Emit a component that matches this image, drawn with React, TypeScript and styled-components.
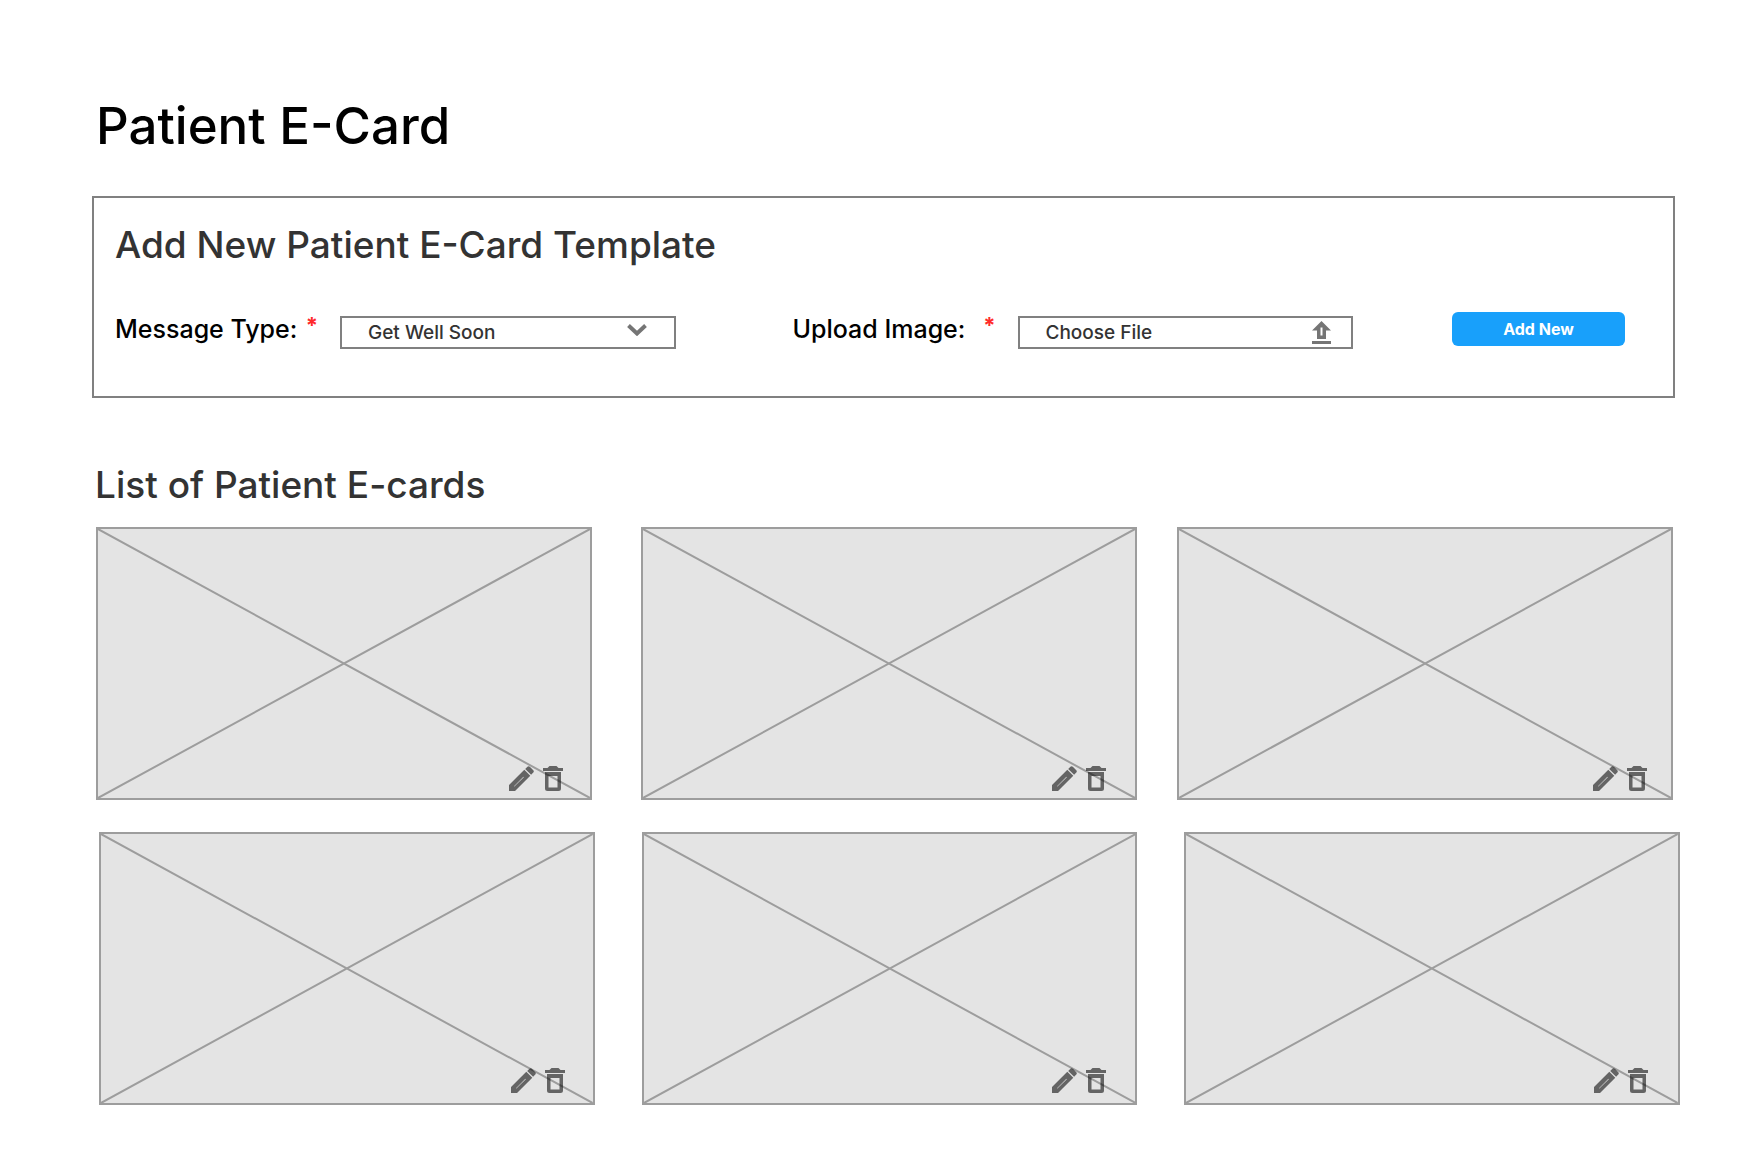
import React, { useState } from "react";
import styled, { createGlobalStyle } from "styled-components";

const GlobalStyle = createGlobalStyle`
  *, *::before, *::after { box-sizing: border-box; }
  body {
    margin: 0;
    background: #ffffff;
    color: #000000;
    font-family: Inter, "Open Sans", "Liberation Sans", sans-serif;
    font-weight: 500;
  }
`;

const Page = styled.main`
  padding: 94px 65px 60px 92px;
`;

const Title = styled.h1`
  margin: 0 0 38px;
  padding-left: 4px;
  font-size: 51px;
  line-height: 64px;
  font-weight: 500;
`;

const Panel = styled.section`
  margin-right: 5px;
  padding: 23px 48px 47px 21px;
  border: 2px solid #808080;
`;

const Heading = styled.h2`
  margin: 0;
  font-size: 37px;
  line-height: 48px;
  font-weight: 500;
  color: #333333;
`;

const Form = styled.form`
  display: flex;
  align-items: flex-start;
  gap: 99px;
  padding-top: 43px;
`;

const Field = styled.div<{ $after?: number }>`
  flex: 1;
  display: flex;
  margin-right: ${(p) => p.$after ?? 0}px;
`;

const Label = styled.label`
  display: flex;
  justify-content: space-between;
  width: 225px;
  padding-right: 22px;
  flex: none;
  font-size: 25px;
  line-height: 34px;
  white-space: nowrap;
`;

const Required = styled.span`
  font-size: 22px;
  line-height: 26px;
  font-weight: 700;
  color: #ff2b2b;
`;

const Control = styled.div`
  flex: 1;
  display: grid;
  align-items: center;
  height: 33px;
  margin-top: 4px;
  border: 2px solid #808080;
  color: #333333;
  font-size: 19px;

  & > * { grid-area: 1 / 1; }
  & > svg { justify-self: end; pointer-events: none; }
  &:focus-within { border-color: #18a0fb; }
`;

const Select = styled.select`
  appearance: none;
  width: 100%;
  height: 29px;
  padding: 0 60px 0 26px;
  border: 0;
  outline: 0;
  background: transparent;
  color: inherit;
  font: inherit;
`;

const FileName = styled.span`
  padding: 0 60px 0 26px;
  overflow: hidden;
  white-space: nowrap;
  text-overflow: ellipsis;
`;

const FileInput = styled.input`
  width: 100%;
  height: 29px;
  margin: 0;
  opacity: 0;
  cursor: pointer;
`;

const Chevron = styled.svg`
  width: 20px;
  height: 12px;
  margin: 0 27px 5px 0;
`;

const UploadIcon = styled.svg`
  width: 19px;
  height: 23px;
  margin-right: 20px;
`;

const AddButton = styled.button`
  width: 173px;
  height: 34px;
  flex: none;
  padding: 0;
  border: 0;
  border-radius: 6px;
  background: #18a0fb;
  color: #ffffff;
  font: 700 16px/34px Inter, "Open Sans", sans-serif;
  cursor: pointer;
`;

const ListSection = styled.section`
  padding: 63px 0 0 3px;
`;

const ListHeading = styled(Heading)`
  margin-bottom: 18px;
`;

const CardRow = styled.div<{ $gaps: [number, number]; $start: number; $end: number }>`
  display: grid;
  grid-template-columns: 1fr ${(p) => p.$gaps[0]}px 1fr ${(p) => p.$gaps[1]}px 1fr;
  padding: 0 ${(p) => p.$end}px 0 ${(p) => p.$start}px;

  & + & { margin-top: 32px; }
  & > :nth-child(2) { grid-column: 3; }
  & > :nth-child(3) { grid-column: 5; }
`;

const Card = styled.article`
  display: grid;
  height: 273px;
  border: 2px solid #9d9d9d;
  background: #e4e4e4;

  & > * { grid-area: 1 / 1; }
`;

const Cross = styled.svg`
  width: 100%;
  height: 269px;
  stroke: #9d9d9d;
  stroke-width: 2;
`;

const Actions = styled.div<{ $right: number; $bottom: number }>`
  place-self: end;
  display: flex;
  gap: 9px;
  padding: 0 ${(p) => p.$right}px ${(p) => p.$bottom}px 0;
`;

const IconButton = styled.button<{ $width: number }>`
  width: ${(p) => p.$width}px;
  height: 25px;
  padding: 0;
  border: 0;
  background: transparent;
  color: rgba(0, 0, 0, 0.56);
  cursor: pointer;

  svg { display: block; width: 100%; height: 100%; fill: currentColor; }
`;

const rows: { gaps: [number, number]; start: number; end: number; bottom: number; insets: number[] }[] = [
  { gaps: [49, 40], start: 1, end: 7, bottom: 7, insets: [27, 29, 24] },
  { gaps: [47, 47], start: 4, end: 0, bottom: 10, insets: [28, 29, 30] },
];

function ECard({ right, bottom, name }: { right: number; bottom: number; name: string }) {
  return (
    <Card aria-label={name}>
      <Cross viewBox="0 0 492 269" preserveAspectRatio="none" aria-hidden="true">
        <path d="M0 0L492 269M492 0L0 269" fill="none" />
      </Cross>
      <Actions $right={right} $bottom={bottom}>
        <IconButton type="button" $width={25} aria-label={`Edit ${name}`}>
          <svg viewBox="0 0 25 25">
            <path
              fillRule="evenodd"
              d="M0 19L15.3 3.7L21.3 9.7L6 25H0ZM5 20.2L5.4 20.6L14.8 11.2L14.4 10.8ZM16.2 2.9L18.4 .7Q19.6-.3 20.8.7L24.3 4.2Q25.3 5.4 24.3 6.6L22.1 8.8Z"
            />
          </svg>
        </IconButton>
        <IconButton type="button" $width={20} aria-label={`Delete ${name}`}>
          <svg viewBox="0 0 20 25">
            <path
              fillRule="evenodd"
              d="M0 2H4.5L6.5 0H13.5L15.5 2H20V5H0ZM2 6H18V22.5Q18 25 15.5 25H4.5Q2 25 2 22.5ZM5.5 10V21.5H14.5V10Z"
            />
          </svg>
        </IconButton>
      </Actions>
    </Card>
  );
}

export default function App() {
  const [fileName, setFileName] = useState("Choose File");
  return (
    <>
      <GlobalStyle />
      <Page>
        <Title>Patient E-Card</Title>
        <Panel>
          <Heading>Add New Patient E-Card Template</Heading>
          <Form onSubmit={(e) => e.preventDefault()}>
            <Field $after={18}>
              <Label htmlFor="message-type">
                Message Type:<Required>*</Required>
              </Label>
              <Control>
                <Select id="message-type" defaultValue="Get Well Soon">
                  <option>Get Well Soon</option>
                </Select>
                <Chevron viewBox="0 0 20 12" aria-hidden="true">
                  <path d="M1.5 1.5L10 9.5L18.5 1.5" fill="none" stroke="#757575" strokeWidth="4" />
                </Chevron>
              </Control>
            </Field>
            <Field>
              <Label htmlFor="card-image">
                Upload Image:<Required>*</Required>
              </Label>
              <Control>
                <FileName>{fileName}</FileName>
                <FileInput
                  id="card-image"
                  type="file"
                  accept="image/*"
                  onChange={(e) => setFileName(e.target.files?.[0]?.name ?? "Choose File")}
                />
                <UploadIcon viewBox="0 0 19 23" aria-hidden="true">
                  <path
                    fill="#757575"
                    fillRule="evenodd"
                    d="M9.5 0L19 9.5H14V18H5V9.5H0ZM8.5 6.5V14.5H10.5V6.5ZM0 20H19V23H0Z"
                  />
                </UploadIcon>
              </Control>
            </Field>
            <AddButton type="submit">Add New</AddButton>
          </Form>
        </Panel>
        <ListSection>
          <ListHeading>List of Patient E-cards</ListHeading>
          {rows.map((row, r) => (
            <CardRow key={r} $gaps={row.gaps} $start={row.start} $end={row.end}>
              {row.insets.map((inset, c) => (
                <ECard key={c} right={inset} bottom={row.bottom} name={`E-card ${r * 3 + c + 1}`} />
              ))}
            </CardRow>
          ))}
        </ListSection>
      </Page>
    </>
  );
}
